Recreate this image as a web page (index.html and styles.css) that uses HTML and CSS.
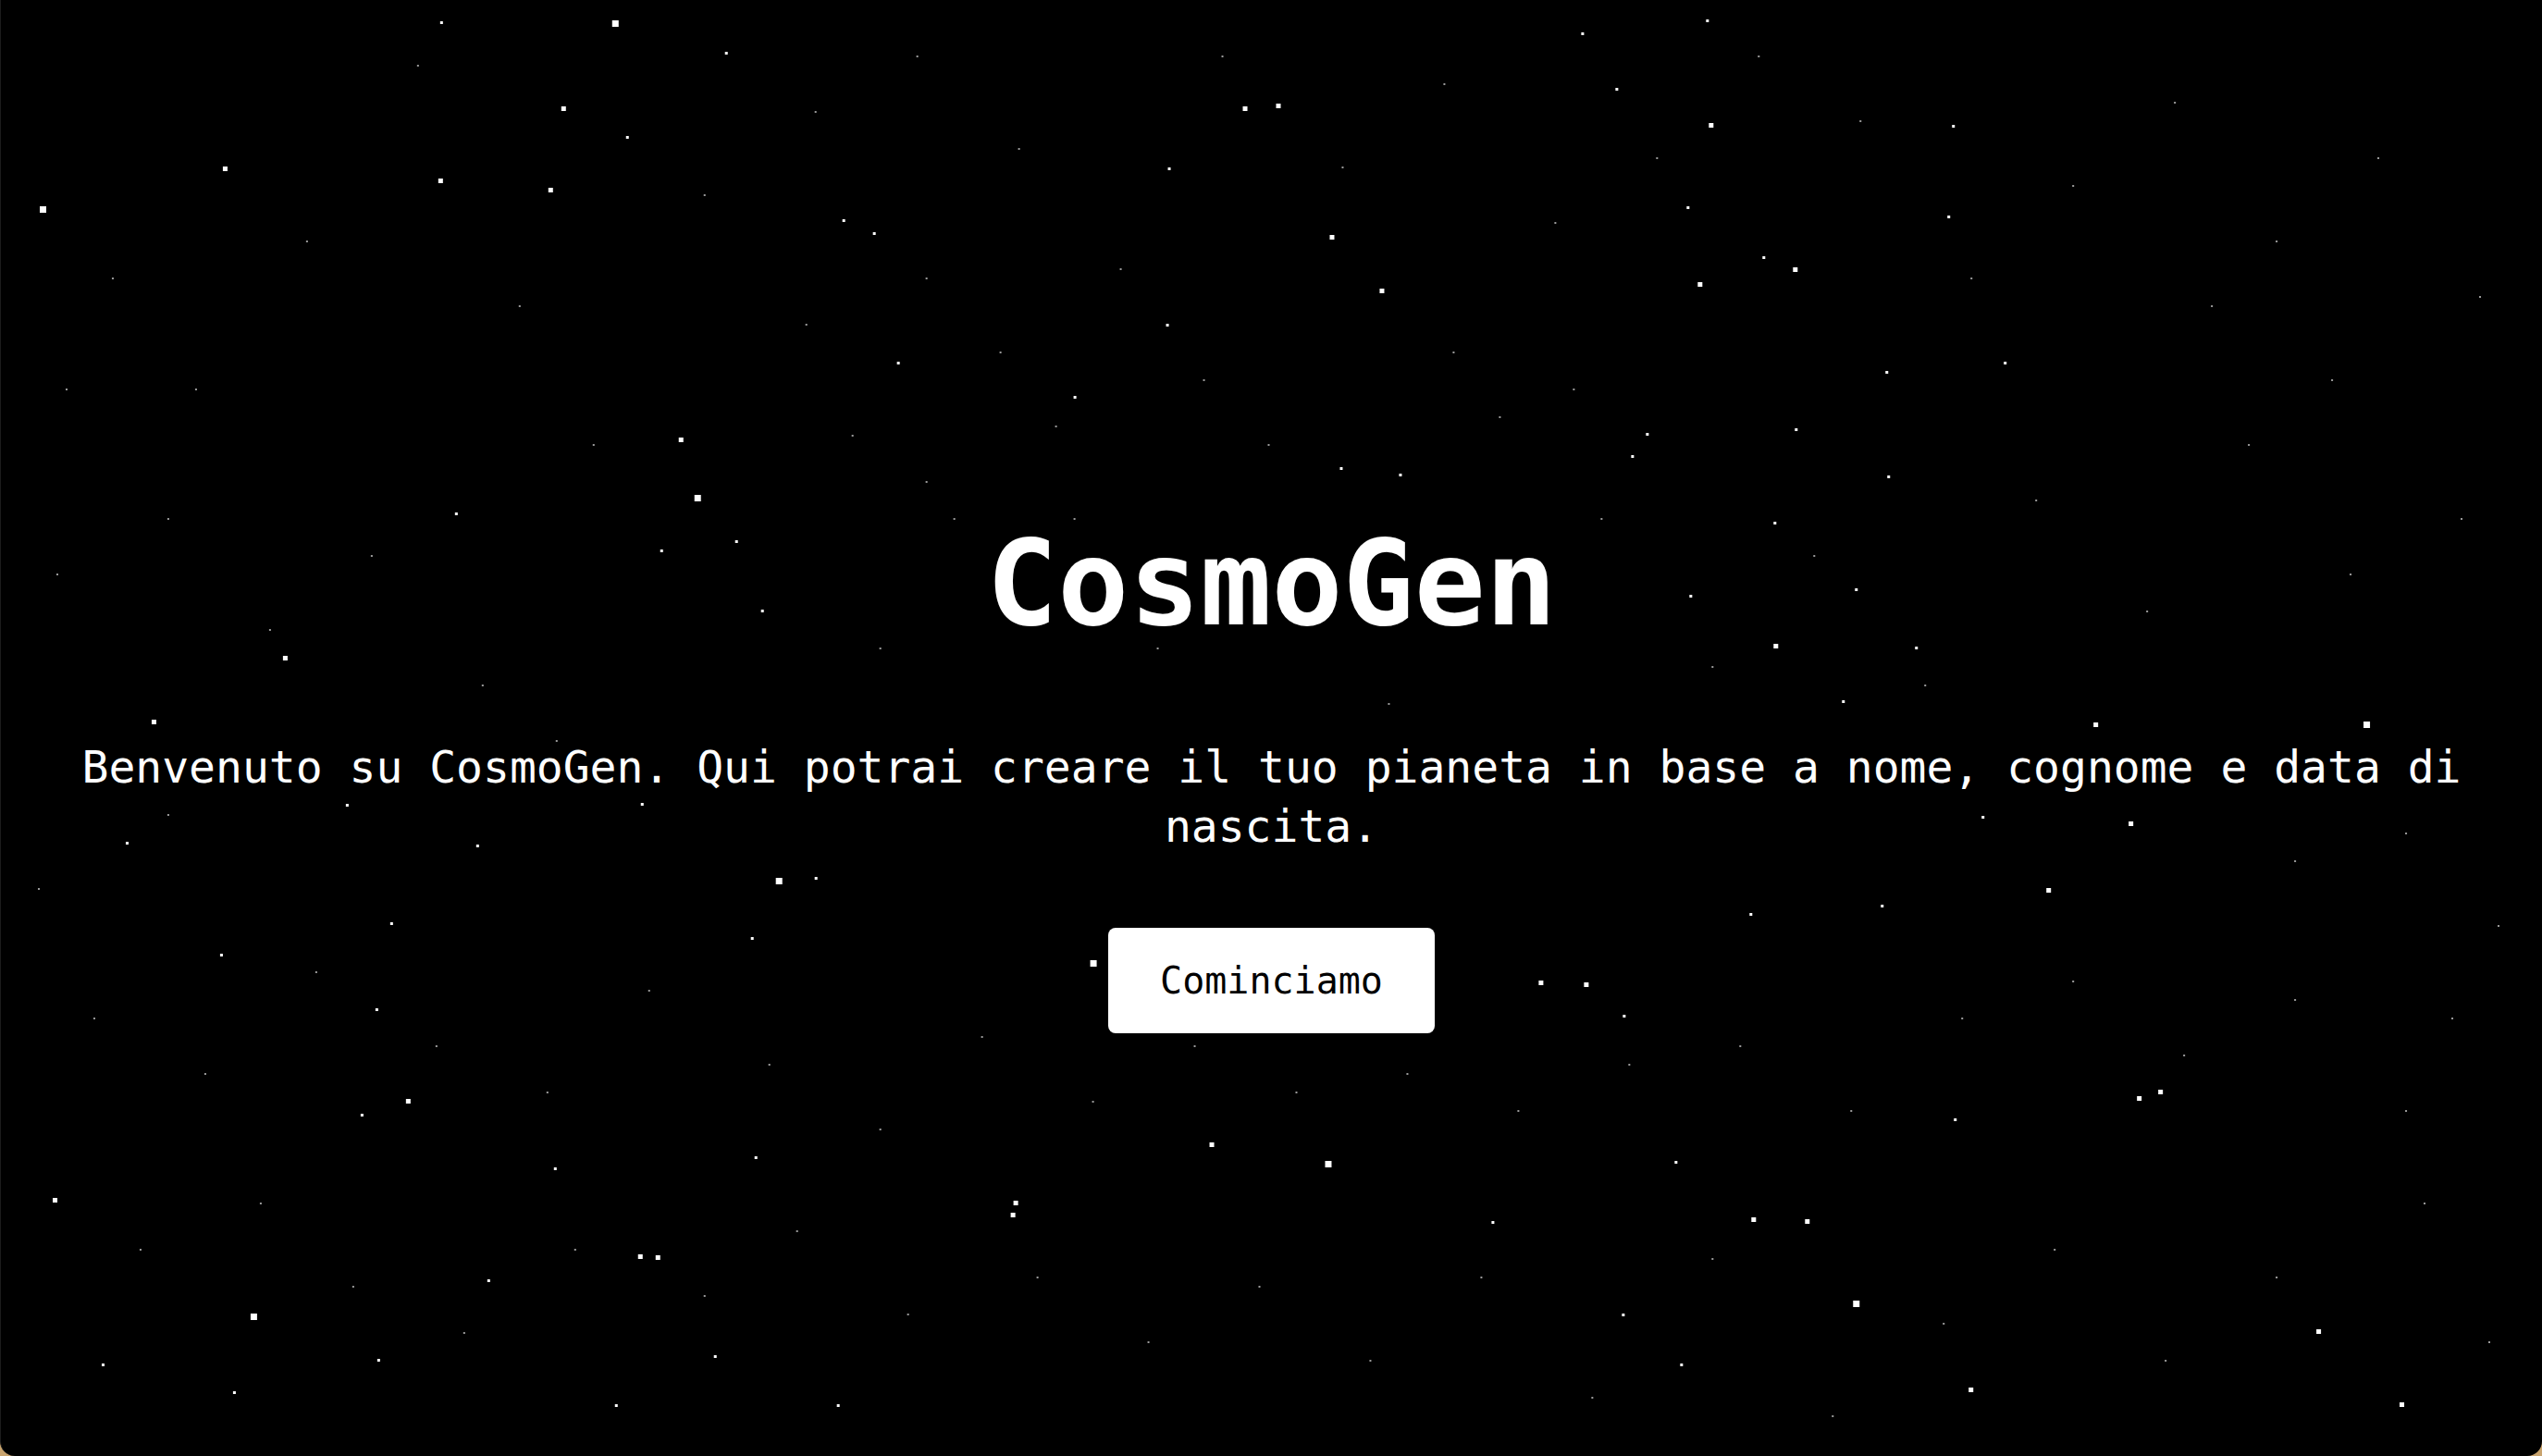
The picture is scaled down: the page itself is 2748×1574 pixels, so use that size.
FILE: index.html
```html
<!DOCTYPE html>
<html lang="it">
<head>
<meta charset="utf-8">
<title>CosmoGen</title>
<link rel="stylesheet" href="styles.css">
</head>
<body>
<main class="space">
  <svg class="stars" viewBox="0 0 2748 1574" preserveAspectRatio="none" aria-hidden="true">
    <path class="star-big" d="M42 223h7v7h-7z M661 22h7v7h-7z M750 535h7v7h-7z M1432 1255h7v7h-7z M2555 780h7v7h-7z M1178 1038h7v7h-7z M2003 1406h7v7h-7z M270 1420h7v7h-7z M838 949h7v7h-7z"/>
    <path class="star-mid" d="M733 473h5v5h-5z M305 709h5v5h-5z M163 778h5v5h-5z M56 1295h5v5h-5z M689 1356h5v5h-5z M708 1357h5v5h-5z M1663 1060h5v5h-5z M1712 1062h5v5h-5z M1893 1316h5v5h-5z M1951 1318h5v5h-5z M2128 1500h5v5h-5z M2504 1437h5v5h-5z M2212 960h5v5h-5z M2594 1516h5v5h-5z M1379 112h5v5h-5z M1343 115h5v5h-5z M1437 254h5v5h-5z M1938 289h5v5h-5z M1835 305h5v5h-5z M1847 133h5v5h-5z M1491 312h5v5h-5z M606 115h5v5h-5z M592 203h5v5h-5z M1917 696h5v5h-5z M2263 781h5v5h-5z M2310 1185h5v5h-5z M2333 1178h5v5h-5z M1307 1235h5v5h-5z M1095 1298h5v5h-5z M1092 1311h5v5h-5z M438 1188h5v5h-5z M2301 888h5v5h-5z M473 193h5v5h-5z M240 180h5v5h-5z"/>
    <path class="star-small" d="M1709 35h3v3h-3z M1844 21h3v3h-3z M2105 233h3v3h-3z M2110 135h3v3h-3z M1746 95h3v3h-3z M1262 181h3v3h-3z M1260 350h3v3h-3z M1160 428h3v3h-3z M969 391h3v3h-3z M910 237h3v3h-3z M943 251h3v3h-3z M783 56h3v3h-3z M475 23h3v3h-3z M676 147h3v3h-3z M491 554h3v3h-3z M822 659h3v3h-3z M713 594h3v3h-3z M794 584h3v3h-3z M526 1383h3v3h-3z M251 1504h3v3h-3z M135 910h3v3h-3z M373 869h3v3h-3z M421 997h3v3h-3z M237 1031h3v3h-3z M405 1090h3v3h-3z M598 1262h3v3h-3z M815 1250h3v3h-3z M811 1013h3v3h-3z M880 948h3v3h-3z M692 868h3v3h-3z M514 913h3v3h-3z M1612 1320h3v3h-3z M1753 1420h3v3h-3z M1891 987h3v3h-3z M2033 978h3v3h-3z M2142 882h3v3h-3z M2166 391h3v3h-3z M1991 757h3v3h-3z M2070 699h3v3h-3z M1823 223h3v3h-3z M1905 277h3v3h-3z M1763 492h3v3h-3z M1512 512h3v3h-3z M2038 401h3v3h-3z M1917 564h3v3h-3z M1826 643h3v3h-3z M109 1474h3v3h-3z M664 1518h3v3h-3z M771 1465h3v3h-3z M904 1518h3v3h-3z M1816 1474h3v3h-3z M1810 1255h3v3h-3z M1754 1097h3v3h-3z M1940 463h3v3h-3z M2040 514h3v3h-3z M2005 636h3v3h-3z M1779 468h3v3h-3z M1448 505h3v3h-3z M389 1204h3v3h-3z M407 1469h3v3h-3z M2112 1209h3v3h-3z"/>
    <path class="star-tiny" d="M120 300h2v2h-2z M210 420h2v2h-2z M330 260h2v2h-2z M450 70h2v2h-2z M560 330h2v2h-2z M640 480h2v2h-2z M760 210h2v2h-2z M880 120h2v2h-2z M990 60h2v2h-2z M1100 160h2v2h-2z M1210 290h2v2h-2z M1320 60h2v2h-2z M1450 180h2v2h-2z M1560 90h2v2h-2z M1680 240h2v2h-2z M1790 170h2v2h-2z M1900 60h2v2h-2z M2010 130h2v2h-2z M2130 300h2v2h-2z M2240 200h2v2h-2z M2350 110h2v2h-2z M2460 260h2v2h-2z M2570 170h2v2h-2z M2680 320h2v2h-2z M60 620h2v2h-2z M180 560h2v2h-2z M290 680h2v2h-2z M400 600h2v2h-2z M520 740h2v2h-2z M600 800h2v2h-2z M950 700h2v2h-2z M1000 520h2v2h-2z M1140 460h2v2h-2z M1250 700h2v2h-2z M1370 480h2v2h-2z M1500 760h2v2h-2z M1620 640h2v2h-2z M1730 560h2v2h-2z M1850 720h2v2h-2z M1960 600h2v2h-2z M2080 740h2v2h-2z M2200 540h2v2h-2z M2320 660h2v2h-2z M2430 480h2v2h-2z M2540 620h2v2h-2z M2660 560h2v2h-2z M100 1100h2v2h-2z M220 1160h2v2h-2z M340 1050h2v2h-2z M470 1130h2v2h-2z M590 1180h2v2h-2z M700 1070h2v2h-2z M830 1150h2v2h-2z M950 1220h2v2h-2z M1060 1120h2v2h-2z M1180 1190h2v2h-2z M1290 1130h2v2h-2z M1400 1180h2v2h-2z M1520 1160h2v2h-2z M1640 1200h2v2h-2z M1760 1150h2v2h-2z M1880 1130h2v2h-2z M2000 1200h2v2h-2z M2120 1100h2v2h-2z M2240 1060h2v2h-2z M2360 1140h2v2h-2z M2480 1080h2v2h-2z M2600 1200h2v2h-2z M2700 1000h2v2h-2z M150 1350h2v2h-2z M280 1300h2v2h-2z M380 1390h2v2h-2z M500 1440h2v2h-2z M620 1350h2v2h-2z M760 1400h2v2h-2z M860 1330h2v2h-2z M980 1420h2v2h-2z M1120 1380h2v2h-2z M1240 1450h2v2h-2z M1360 1390h2v2h-2z M1480 1470h2v2h-2z M1600 1380h2v2h-2z M1720 1510h2v2h-2z M1850 1360h2v2h-2z M1980 1530h2v2h-2z M2100 1430h2v2h-2z M2220 1350h2v2h-2z M2340 1470h2v2h-2z M2460 1380h2v2h-2z M2620 1300h2v2h-2z M2690 1450h2v2h-2z M1000 300h2v2h-2z M1080 380h2v2h-2z M1160 560h2v2h-2z M1300 410h2v2h-2z M1620 450h2v2h-2z M1700 420h2v2h-2z M1570 380h2v2h-2z M920 470h2v2h-2z M870 350h2v2h-2z M1030 560h2v2h-2z M2390 330h2v2h-2z M2520 410h2v2h-2z M2600 900h2v2h-2z M2480 930h2v2h-2z M70 420h2v2h-2z M40 960h2v2h-2z M180 880h2v2h-2z M2650 1100h2v2h-2z"/>
  </svg>
  <section class="hero">
    <h1 class="hero-title">CosmoGen</h1>
    <p class="hero-text">Benvenuto su CosmoGen. Qui potrai creare il tuo pianeta in base a nome, cognome e data di nascita.</p>
    <button class="hero-button" type="button">Cominciamo</button>
  </section>
</main>
</body>
</html>
```

FILE: styles.css
```css
html, body {
  margin: 0;
  padding: 0;
  height: 100%;
}

body {
  background: #c9a46f;
  font-family: "DejaVu Sans Mono", "Liberation Mono", monospace;
  overflow: hidden;
}

.space {
  position: relative;
  height: 100vh;
  box-sizing: border-box;
  background: #000;
  border-bottom-left-radius: 16px;
  border-bottom-right-radius: 16px;
  border-left: 1px solid #1c1c1c;
  overflow: hidden;
  display: flex;
  align-items: center;
  justify-content: center;
  padding-top: 96px;
}

.stars {
  position: absolute;
  inset: 0;
  width: 100%;
  height: 100%;
  pointer-events: none;
}

.star-big,
.star-mid,
.star-small {
  fill: #fff;
}

.star-tiny {
  fill: #9a9a9a;
}

.hero {
  position: relative;
  display: flex;
  flex-direction: column;
  align-items: center;
  text-align: center;
  padding: 0 32px;
  color: #fff;
}

.hero-title {
  margin: 0 0 89px;
  font-size: 128px;
  line-height: 154px;
  font-weight: 700;
}

.hero-text {
  margin: 0 0 78px;
  font-size: 48px;
  line-height: 64px;
  font-weight: 400;
}

.hero-button {
  font-family: inherit;
  font-size: 40px;
  line-height: 54px;
  padding: 30px 56px;
  color: #000;
  background: #fff;
  border: none;
  border-radius: 8px;
  cursor: pointer;
}
```
